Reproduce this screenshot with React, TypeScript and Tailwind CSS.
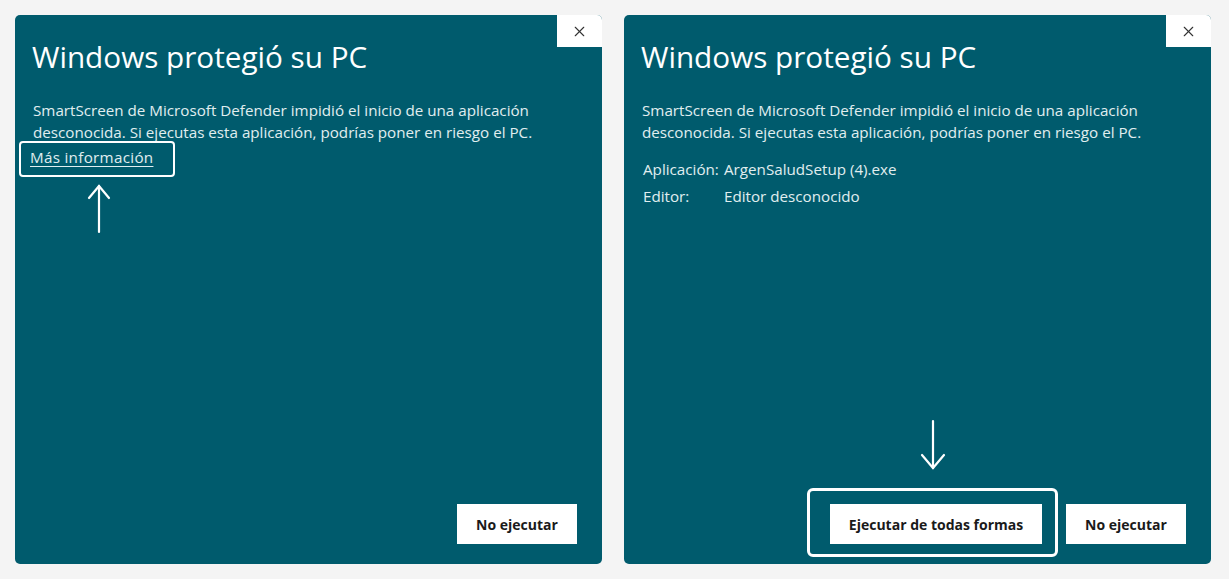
import { X } from "lucide-react";

const font = { fontFamily: '"Open Sans", "Noto Sans", sans-serif' };

function ArrowUp() {
  return (
    <svg width="24" height="50" viewBox="0 0 24 50" fill="none" stroke="white" strokeWidth="2.2" strokeLinecap="round">
      <path d="M12 2 L12 48" />
      <path d="M2 14 L12 2 L22 14" />
    </svg>
  );
}

function ArrowDown() {
  return (
    <svg width="28" height="52" viewBox="0 0 28 52" fill="none" stroke="white" strokeWidth="2.2" strokeLinecap="round">
      <path d="M14 2 L14 49" />
      <path d="M3 36 L14 49 L25 36" />
    </svg>
  );
}

function Dialog({ detalles }: { detalles: boolean }) {
  return (
    <div className="relative flex h-[549px] w-[587px] flex-col rounded-[5px] bg-[#005b6d] pb-[20px] pl-[17px] pr-[25px] pt-[22px]">
      <div className="absolute right-0 top-0 flex h-[32px] w-[45px] items-center justify-center rounded-tr-[5px] bg-white">
        <X className="h-[17px] w-[17px] text-[#333]" strokeWidth={1.6} />
      </div>

      <h1 className="text-[29.7px] leading-[40px] text-white">Windows protegió su PC</h1>

      <p className="mt-[22px] pl-[1px] text-[15.2px] leading-[22px] text-[#e0eef0]">
        SmartScreen de Microsoft Defender impidió el inicio de una aplicación
        <br />
        desconocida. Si ejecutas esta aplicación, podrías poner en riesgo el PC.
      </p>

      {!detalles && (
        <div className="relative mt-[2px] self-start">
          <span className="-ml-[2px] text-[15.2px] leading-[22px] tracking-[0.3px] text-[#e0eef0] underline underline-offset-[3px]">Más información</span>
          <div className="absolute -left-[13px] -right-[22px] -top-[4px] -bottom-[8px] rounded-[4px] border-2 border-white" />
          <div className="absolute left-[55px] top-[39px]">
            <ArrowUp />
          </div>
        </div>
      )}

      {detalles && (
        <div className="mt-[15px] flex flex-col gap-[5px] pl-[2px] text-[15.2px] leading-[22px] text-[#e0eef0]">
          <div className="flex">
            <span className="w-[81px]">Aplicación:</span>
            <span>ArgenSaludSetup (4).exe</span>
          </div>
          <div className="flex">
            <span className="w-[81px]">Editor:</span>
            <span>Editor desconocido</span>
          </div>
        </div>
      )}

      <div className="mt-auto flex justify-end gap-[24px]">
        {detalles && (
          <div className="relative">
            <button className="h-[40px] w-[212px] bg-white text-[14px] font-bold text-[#1a1a1a]">Ejecutar de todas formas</button>
            <div className="absolute -left-[23px] -right-[16px] -top-[16px] -bottom-[13px] rounded-[6px] border-[3px] border-white" />
            <div className="absolute left-[89px] -top-[85px]">
              <ArrowDown />
            </div>
          </div>
        )}
        <button className="h-[40px] w-[120px] bg-white text-[14px] font-bold text-[#1a1a1a]">No ejecutar</button>
      </div>
    </div>
  );
}

export default function App() {
  return (
    <div style={font} className="flex h-[579px] w-[1229px] gap-[22px] bg-[#f4f4f4] px-[15px] pt-[15px]">
      <Dialog detalles={false} />
      <Dialog detalles={true} />
    </div>
  );
}
